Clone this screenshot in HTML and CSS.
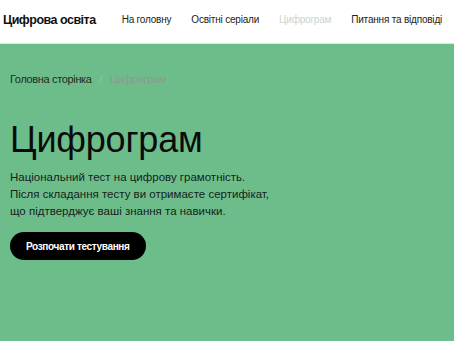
FILE: index.html
```html
<!DOCTYPE html>
<html lang="uk">
<head>
    <meta charset="UTF-8">
    <meta name="viewport" content="width=device-width, initial-scale=1">
    <title>Цифрограм</title>
    <link rel="stylesheet" href="styles.css">
</head>
<body>
<header class="topBar">
    <div class="logo">Цифрова освіта</div>
    <nav class="menu">
        <a href="#">На головну</a>
        <a href="#">Освітні серіали</a>
        <a href="#" class="current">Цифрограм</a>
        <a href="#">Питання та відповіді</a>
    </nav>
</header>
<section class="hero">
    <div class="crumbs">
        <a href="#">Головна сторінка</a>
        <span class="sep">/</span>
        <span class="here">Цифрограм</span>
    </div>
    <h1>Цифрограм</h1>
    <p class="lead">Національний тест на цифрову грамотність.<br>
        Після складання тесту ви отримаєте сертифікат,<br>
        що підтверджує ваші знання та навички.</p>
    <button type="button" class="startBtn">Розпочати тестування</button>
</section>
</body>
</html>
```

FILE: styles.css
```css
html, body{
    margin:0;
    height:100%;
}
body{
    font-family:"Liberation Sans", Arial, sans-serif;
    background-color:#6dbd8b;
    color:#111;
    overflow:hidden;
}
.topBar{
    display:flex;
    align-items:center;
    height:44px;
    background-color:#fff;
    border-bottom:1px solid #d4ecdd;
    padding:0 3px;
    box-sizing:border-box;
}
.logo{
    flex-shrink:0;
    white-space:nowrap;
    font-size:12.5px;
    font-weight:bold;
    letter-spacing:-0.5px;
    color:#111;
    margin-top:-4px;
    margin-right:26px;
}
.menu{
    display:flex;
    gap:20px;
    margin-top:-4px;
}
.menu a{
    font-size:10px;
    letter-spacing:-0.2px;
    color:#222;
    text-decoration:none;
    white-space:nowrap;
}
.menu a.current{
    color:#c8d4cc;
}
.hero{
    padding:29px 10px 0;
}
.crumbs{
    font-size:11px;
    letter-spacing:-0.35px;
}
.crumbs a{
    color:#1d2b22;
    text-decoration:none;
}
.crumbs .sep{
    color:#8fc7a4;
    margin:0 5px;
}
.crumbs .here{
    color:#8e9a92;
}
h1{
    font-size:36px;
    font-weight:normal;
    margin:34px 0 0;
    line-height:42px;
    color:#0b0b0b;
    letter-spacing:-0.2px;
}
.lead{
    font-size:11.5px;
    line-height:17px;
    margin:8px 0 0;
    color:#16221a;
}
.startBtn{
    margin-top:12px;
    height:28px;
    padding:0 16px;
    border:none;
    border-radius:14px;
    background-color:#000;
    color:#fff;
    font-family:inherit;
    font-size:10px;
    letter-spacing:-0.35px;
    font-weight:bold;
}
```
